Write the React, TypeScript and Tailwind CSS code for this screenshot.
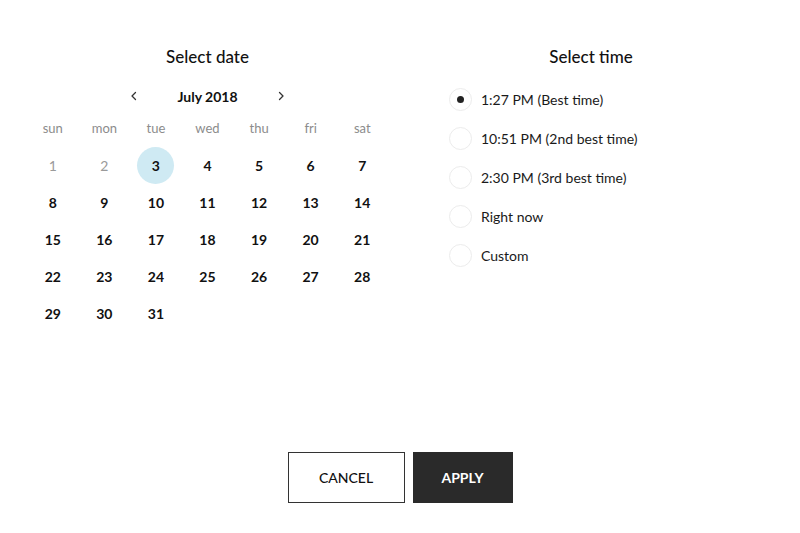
const weekdays = ['sun', 'mon', 'tue', 'wed', 'thu', 'fri', 'sat']

const times = [
  '1:27 PM (Best time)',
  '10:51 PM (2nd best time)',
  '2:30 PM (3rd best time)',
  'Right now',
  'Custom',
]

function Chevron({ dir }: { dir: 'left' | 'right' }) {
  return (
    <svg width="12" height="12" viewBox="0 0 12 12" className="text-[#333]">
      <path
        d={dir === 'left' ? 'M7.5 2.5 4 6l3.5 3.5' : 'M4.5 2.5 8 6 4.5 9.5'}
        fill="none"
        stroke="currentColor"
        strokeWidth="1.3"
        strokeLinecap="round"
        strokeLinejoin="round"
      />
    </svg>
  )
}

export default function App() {
  const days: (number | null)[] = []
  for (let d = 1; d <= 31; d++) days.push(d)
  while (days.length < 35) days.push(null)

  return (
    <div className="w-[800px] h-[533px] bg-white text-[#111] font-['Lato','Liberation_Sans',sans-serif] overflow-hidden">
      <div className="flex pl-[27px] pt-[45px] gap-[61px]">
        {/* date */}
        <div className="w-[361px] flex flex-col">
          <h2 className="h-6 leading-6 text-center text-[17px] font-medium">Select date</h2>
          <div className="mt-[12px] h-[30px] flex items-center justify-center">
            <div className="w-[160px] flex items-center justify-between">
              <Chevron dir="left" />
              <span className="text-[14px] font-bold">July 2018</span>
              <Chevron dir="right" />
            </div>
          </div>
          <div className="mt-[6px] grid grid-cols-7 h-6 items-center">
            {weekdays.map((w) => (
              <span key={w} className="text-center text-[13px] text-[#8c8c8c]">
                {w}
              </span>
            ))}
          </div>
          <div className="mt-[6px] grid grid-cols-7">
            {days.map((d, i) => (
              <div key={i} className="h-[37px] flex items-center justify-center">
                {d === null ? null : (
                  <span
                    className={`w-[37px] h-[37px] rounded-full flex items-center justify-center text-[14px] font-bold ${
                      d === 3 ? 'bg-[#cfeaf3]' : ''
                    } ${d < 3 ? 'text-[#9a9a9a] font-normal' : ''}`}
                  >
                    {d}
                  </span>
                )}
              </div>
            ))}
          </div>
        </div>

        {/* time */}
        <div className="w-[284px] flex flex-col">
          <h2 className="h-6 leading-6 text-center text-[17px] font-medium">Select time</h2>
          <div className="mt-[11px] flex flex-col">
            {times.map((t, i) => (
              <div key={t} className="h-[39px] flex items-center gap-[9px]">
                <span className="w-[23px] h-[23px] rounded-full border border-[#ececec] flex items-center justify-center">
                  {i === 0 ? <span className="w-[7px] h-[7px] rounded-full bg-[#222]" /> : null}
                </span>
                <span className="text-[14px] text-[#1a1a1a]">{t}</span>
              </div>
            ))}
          </div>
        </div>
      </div>

      <div className="mt-[120px] flex justify-center gap-[8px]">
        <button
          type="button"
          className="w-[117px] h-[51px] border border-[#333] bg-white text-[14px] text-[#111] font-medium"
        >
          CANCEL
        </button>
        <button
          type="button"
          className="w-[100px] h-[51px] bg-[#2a2a2a] text-white text-[14px] font-bold"
        >
          APPLY
        </button>
      </div>
    </div>
  )
}
